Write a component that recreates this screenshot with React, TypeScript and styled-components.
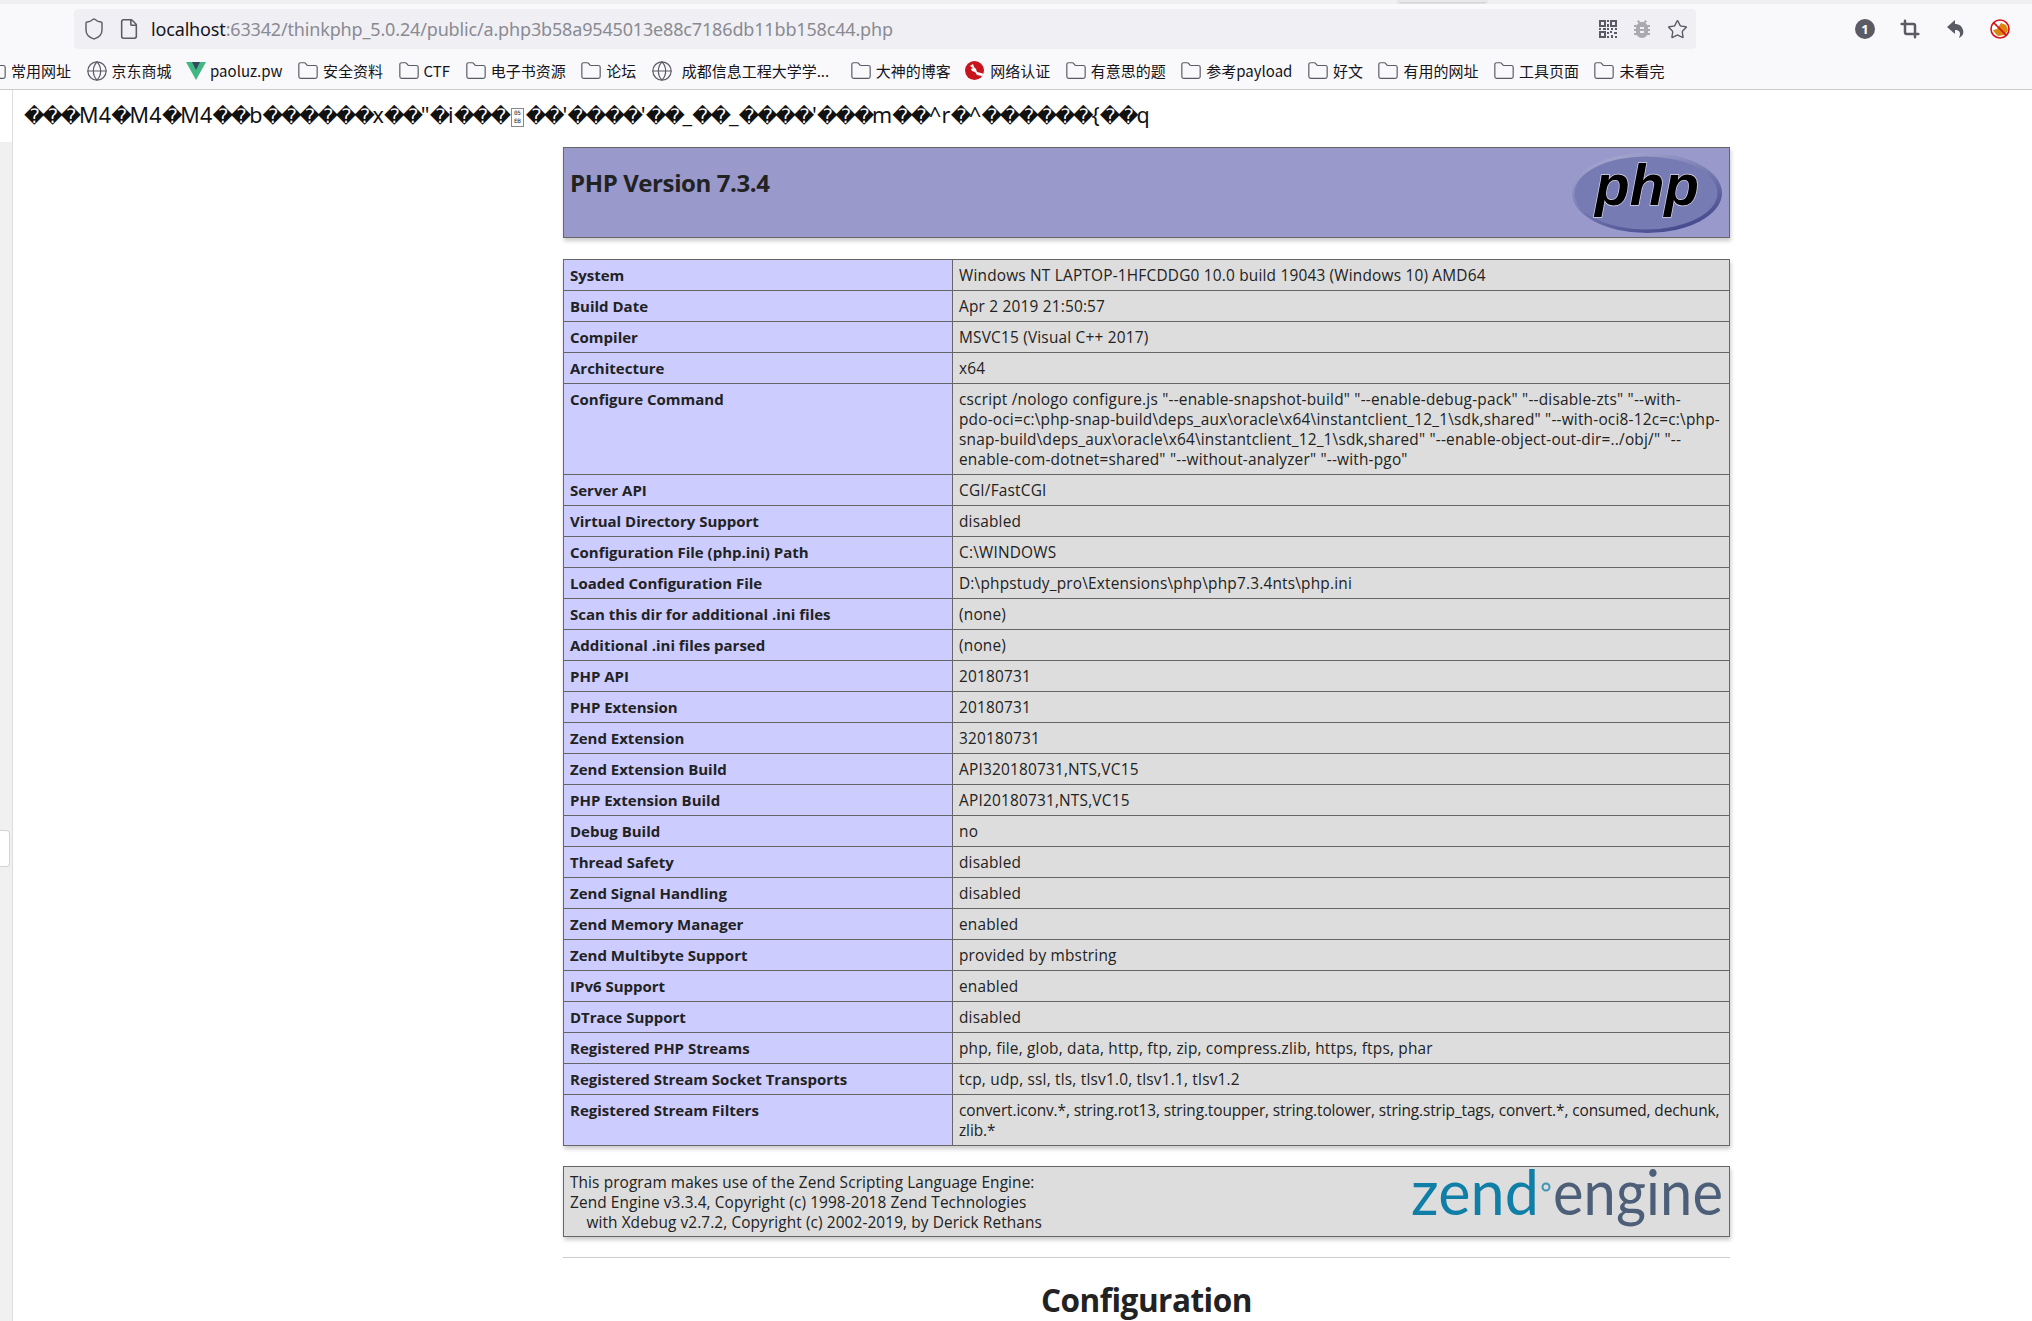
import React from 'react';
import styled, { createGlobalStyle } from 'styled-components';
import { Shield, File, Star, Folder, Globe, Crop } from 'lucide-react';
import { MdBugReport } from 'react-icons/md';

const GlobalStyle = createGlobalStyle`
  html, body {
    margin: 0;
    padding: 0;
    height: 1321px;
    overflow: hidden;
    background: #fff;
  }
  body {
    font-family: 'Open Sans', 'Noto Sans CJK SC', sans-serif;
    color: #222;
  }
`;

const Page = styled.div`
  width: 2032px;
  height: 1321px;
  overflow: hidden;
  display: flex;
  flex-direction: column;
`;

const TabStrip = styled.div`
  height: 4px;
  flex: none;
  background: #f0f0f0;
  padding-left: 1398px;
  overflow: hidden;
`;

const TabEdge = styled.div`
  width: 89px;
  height: 2px;
  border-radius: 0 0 6px 6px;
  box-shadow: 0 1px 3px #bbb;
  background: #e8e8e8;
`;

const Toolbar = styled.div`
  height: 46px;
  flex: none;
  background: #f9f9fb;
  display: flex;
  align-items: flex-start;
  padding: 5px 0 0 74px;
  box-sizing: border-box;
`;

const UrlBar = styled.div`
  width: 1622px;
  height: 40px;
  background: #f0f0f4;
  border-radius: 4px;
  display: flex;
  align-items: center;
  padding: 0 8px;
  box-sizing: border-box;
  color: #5b5b66;
`;

const FileMark = styled(File)`
  margin-left: 12px;
`;

const UrlText = styled.div`
  margin-left: 11px;
  flex: 1;
  font-family: 'Noto Sans', sans-serif;
  font-size: 18px;
  letter-spacing: -0.16px;
  color: #8a8a92;
  white-space: nowrap;
  span {
    color: #15141a;
  }
`;

const UrlIcons = styled.div`
  display: flex;
  align-items: center;
  gap: 13px;
`;

const ToolButtons = styled.div`
  display: flex;
  align-items: center;
  height: 40px;
  margin-left: 159px;
  gap: 25px;
  color: #5b5b66;
`;

const BadgeOne = styled.div`
  width: 20px;
  height: 20px;
  border-radius: 50%;
  background: #5b5b66;
  color: #fff;
  font: 700 13px/20px 'Open Sans', sans-serif;
  text-align: center;
`;

const Bookmarks = styled.div`
  height: 37px;
  padding-top: 2px;
  flex: none;
  background: #f9f9fb;
  border-bottom: 1px solid #ccc;
  display: flex;
  align-items: center;
  gap: 14.5px;
  margin-left: -15px;
  white-space: nowrap;
`;

const Mark = styled.div<{ $wide?: boolean }>`
  display: flex;
  align-items: center;
  gap: ${(p) => (p.$wide ? '9px' : '4px')};
  margin-right: ${(p) => (p.$wide ? '6px' : '0')};
  font-family: 'Noto Sans CJK SC', sans-serif;
  font-size: 15px;
  color: #15141a;
  svg {
    flex: none;
    color: #5b5b66;
  }
`;

const Body = styled.div`
  flex: 1;
  display: flex;
  min-height: 0;
`;

const Gutter = styled.div`
  width: 12px;
  flex: none;
  position: relative;
  background: #f0f0f0;
  border-right: 1px solid #ddd;
`;

const GutterGap = styled.div`
  height: 52px;
  background: #fff;
`;

const Handle = styled.div`
  position: absolute;
  left: 0;
  top: 740px;
  width: 10px;
  height: 37px;
  background: #fff;
  border: 1px solid #d4d4d4;
  border-left: 0;
  border-radius: 0 4px 4px 0;
  box-sizing: border-box;
`;

const Content = styled.div`
  flex: 1;
  min-width: 0;
`;

const Garbage = styled.div`
  height: 47px;
  padding: 6px 0 0 11px;
  box-sizing: border-box;
  display: flex;
  align-items: center;
  white-space: pre;
  font-family: 'Noto Sans', 'DejaVu Sans', sans-serif;
  font-size: 21.5px;
  letter-spacing: 0.25px;
  color: #111;
`;

const Bad = styled.span`
  font-family: 'DejaVu Sans', sans-serif;
  font-size: 20px;
  letter-spacing: -2.2px;
`;

const Tofu = styled.span`
  display: inline-block;
  width: 13px;
  height: 19px;
  margin: 0 2px 6px 2px;
  border: 1px solid #888;
  box-sizing: border-box;
  font-family: 'DejaVu Sans Mono', monospace;
  font-size: 6px;
  line-height: 8px;
  text-align: center;
  letter-spacing: -0.3px;
  color: #222;
`;

const Center = styled.div`
  width: 1167px;
  margin-left: 550px;
  padding-top: 10px;
`;

const HeaderBox = styled.div`
  height: 91px;
  box-sizing: border-box;
  border: 1px solid #666;
  background: #99c;
  box-shadow: 1px 3px 4px #ccc;
  padding: 5px 6px;
  display: flex;
  justify-content: space-between;
`;

const Title = styled.h1`
  margin: 12px 0 0;
  font-family: 'Open Sans', sans-serif;
  font-size: 24px;
  line-height: 36px;
  font-weight: 700;
  letter-spacing: -0.4px;
  color: #222;
`;

const Grid = styled.table`
  width: 1167px;
  margin: 21px 0 20px;
  table-layout: fixed;
  border-collapse: collapse;
  box-shadow: 1px 3px 4px #ccc;
`;

const Cell = styled.td<{ $head?: boolean; $tracking?: number }>`
  border: 1px solid #666;
  padding: ${(p) => (p.$head ? '5px 6px' : '6px 6px 4px')};
  vertical-align: top;
  font-family: 'Open Sans', sans-serif;
  line-height: 20px;
  white-space: pre;
  font-size: ${(p) => (p.$head ? '15px' : '15.4px')};
  letter-spacing: ${(p) => (p.$head ? 0 : p.$tracking ?? 0.2)}px;
  font-weight: ${(p) => (p.$head ? 700 : 400)};
  background: ${(p) => (p.$head ? '#ccf' : '#ddd')};
  width: ${(p) => (p.$head ? '376px' : 'auto')};
`;

const ZendBox = styled.div`
  height: 71px;
  box-sizing: border-box;
  border: 1px solid #666;
  background: #ddd;
  box-shadow: 1px 3px 4px #ccc;
  padding: 6px 6px 4px;
  font-size: 15.4px;
  line-height: 20px;
  letter-spacing: 0.1px;
  white-space: pre;
  display: flex;
  justify-content: space-between;
`;

const ZendMark = styled.svg`
  margin: -20px -5px 0 0;
  flex: none;
`;

const Rule = styled.hr`
  width: 1167px;
  height: 1px;
  margin: 20px 0 0;
  border: 0;
  background: #ccc;
`;

const Section = styled.h2`
  margin: 22px 0 0;
  text-align: center;
  font-family: 'Open Sans', sans-serif;
  font-size: 31.5px;
  line-height: 40px;
  font-weight: 700;
  letter-spacing: -0.5px;
  color: #222;
`;

const QrIcon = () => (
  <svg width="18" height="18" viewBox="0 0 18 18" fill="#5b5b66">
    <path d="M0 0h7v7H0zM2 2v3h3V2zM11 0h7v7h-7zM13 2v3h3V2zM0 11h7v7H0zM2 13v3h3v-3z" fillRule="evenodd" />
    <path d="M8 0h2v2H8zM8 4h2v3H8zM0 8h2v2H0zM4 8h3v2H4zM8 8h2v2H8zM12 8h2v2h-2zM16 8h2v2h-2zM8 12h2v2H8zM11 11h2v2h-2zM15 12h3v2h-3zM8 16h2v2H8zM12 15h2v3h-2zM16 16h2v2h-2z" />
  </svg>
);

const UndoIcon = () => (
  <svg width="20" height="20" viewBox="0 0 20 20" fill="#5b5b66">
    <path d="M10 1L2 8l8 7v-4c3 0 5 1 5 4 0 2-1 3-1 4 4-2 5-5 4-8-1-4-4-6-8-6z" />
  </svg>
);

const NoEntryIcon = () => (
  <svg width="20" height="20" viewBox="0 0 20 20">
    <circle cx="10" cy="10" r="9" fill="#fff" />
    <path d="M3 11l4-1 4-6 5 2 2 5-3 5-7 1-3-3z" fill="#d9860f" />
    <circle cx="10" cy="10" r="9" fill="none" stroke="#d80f16" strokeWidth="1.6" />
    <path d="M3.6 3.6l12.8 12.8" stroke="#d80f16" strokeWidth="1.6" />
  </svg>
);

const VeeIcon = () => (
  <svg width="20" height="18" viewBox="0 0 20 18">
    <path d="M0 0h20L10 18z" fill="#41b883" />
    <path d="M6 0h8l-4 8z" fill="#35495e" />
  </svg>
);

const RedSealIcon = () => (
  <svg width="19" height="19" viewBox="0 0 19 19" style={{ marginRight: 2 }}>
    <circle cx="9.5" cy="9.5" r="9.5" fill="#c8141c" />
    <path d="M5 5l3-2 1 3 2 2 1 3 4 1 3 1-2 2-5-1-2-3-3-1-1-2 2-1z" fill="#fff" />
  </svg>
);

const PhpLogo = () => (
  <svg width="152" height="82" viewBox="0 0 152 82">
    <defs>
      <linearGradient id="phpRim" x1="0.2" y1="0" x2="0.8" y2="1">
        <stop offset="0" stopColor="#a9abd0" />
        <stop offset="0.5" stopColor="#7478b0" />
        <stop offset="1" stopColor="#3f4488" />
      </linearGradient>
    </defs>
    <ellipse cx="76" cy="40" rx="75" ry="40" fill="url(#phpRim)" />
    <ellipse cx="75" cy="40" rx="71.5" ry="36.5" fill="#777bb3" />
    <text
      x="24"
      y="52"
      textLength="104"
      lengthAdjust="spacingAndGlyphs"
      fontFamily="'Liberation Sans', sans-serif"
      fontStyle="italic"
      fontWeight="700"
      fontSize="58"
      fill="#000"
      stroke="#d8d8ea"
      strokeWidth="1.4"
      paintOrder="stroke"
    >
      php
    </text>
  </svg>
);

const ZendLogo = () => (
  <ZendMark width="325" height="88" viewBox="0 0 325 88" fontFamily="Lato, sans-serif" fontWeight="400">
    <text x="8" y="62" fontSize="62" fill="#0f7fa8" textLength="128" lengthAdjust="spacingAndGlyphs">
      zend
    </text>
    <circle cx="143" cy="34" r="3.5" fill="none" stroke="#3d95b6" strokeWidth="2" />
    <text x="150" y="62" fontSize="62" fill="#4d5f78" textLength="170" lengthAdjust="spacingAndGlyphs">
      engine
    </text>
  </ZendMark>
);

const rowsTop: [string, string, number?][] = [
  ['System', 'Windows NT LAPTOP-1HFCDDG0 10.0 build 19043 (Windows 10) AMD64'],
  ['Build Date', 'Apr 2 2019 21:50:57'],
  ['Compiler', 'MSVC15 (Visual C++ 2017)'],
  ['Architecture', 'x64'],
  [
    'Configure Command',
    'cscript /nologo configure.js "--enable-snapshot-build" "--enable-debug-pack" "--disable-zts" "--with-\npdo-oci=c:\\php-snap-build\\deps_aux\\oracle\\x64\\instantclient_12_1\\sdk,shared" "--with-oci8-12c=c:\\php-\nsnap-build\\deps_aux\\oracle\\x64\\instantclient_12_1\\sdk,shared" "--enable-object-out-dir=../obj/" "--\nenable-com-dotnet=shared" "--without-analyzer" "--with-pgo"',
  ],
  ['Server API', 'CGI/FastCGI'],
  ['Virtual Directory Support', 'disabled'],
  ['Configuration File (php.ini) Path', 'C:\\WINDOWS'],
  ['Loaded Configuration File', 'D:\\phpstudy_pro\\Extensions\\php\\php7.3.4nts\\php.ini'],
  ['Scan this dir for additional .ini files', '(none)'],
  ['Additional .ini files parsed', '(none)'],
  ['PHP API', '20180731'],
  ['PHP Extension', '20180731'],
  ['Zend Extension', '320180731'],
  ['Zend Extension Build', 'API320180731,NTS,VC15'],
  ['PHP Extension Build', 'API20180731,NTS,VC15'],
  ['Debug Build', 'no'],
  ['Thread Safety', 'disabled'],
  ['Zend Signal Handling', 'disabled'],
  ['Zend Memory Manager', 'enabled'],
  ['Zend Multibyte Support', 'provided by mbstring'],
  ['IPv6 Support', 'enabled'],
  ['DTrace Support', 'disabled'],
  ['Registered PHP Streams', 'php, file, glob, data, http, ftp, zip, compress.zlib, https, ftps, phar'],
  ['Registered Stream Socket Transports', 'tcp, udp, ssl, tls, tlsv1.0, tlsv1.1, tlsv1.2'],
  [
    'Registered Stream Filters',
    'convert.iconv.*, string.rot13, string.toupper, string.tolower, string.strip_tags, convert.*, consumed, dechunk,\nzlib.*',
    -0.1,
  ],
];

type Kind = 'folder' | 'globe' | 'vee' | 'seal';

const marks: [Kind, string][] = [
  ['folder', '常用网址'],
  ['globe', '京东商城'],
  ['vee', 'paoluz.pw'],
  ['folder', '安全资料'],
  ['folder', 'CTF'],
  ['folder', '电子书资源'],
  ['folder', '论坛'],
  ['globe', '成都信息工程大学学...'],
  ['folder', '大神的博客'],
  ['seal', '网络认证'],
  ['folder', '有意思的题'],
  ['folder', '参考payload'],
  ['folder', '好文'],
  ['folder', '有用的网址'],
  ['folder', '工具页面'],
  ['folder', '未看完'],
];

const markIcon = (kind: Kind) => {
  if (kind === 'globe') return <Globe size={22} strokeWidth={1.3} />;
  if (kind === 'vee') return <VeeIcon />;
  if (kind === 'seal') return <RedSealIcon />;
  return <Folder size={22} strokeWidth={1.3} />;
};

// runs of replacement characters sit tighter than the latin text around them
const garbled = (text: string) =>
  text.split(/(\uFFFD+)/).map((part, i) => (part.startsWith('\uFFFD') ? <Bad key={i}>{part}</Bad> : part));

const App = (): JSX.Element => (
  <Page>
    <GlobalStyle />
    <TabStrip>
      <TabEdge />
    </TabStrip>
    <Toolbar>
      <UrlBar>
        <Shield size={24} strokeWidth={1.4} />
        <FileMark size={22} strokeWidth={1.7} />
        <UrlText>
          <span>localhost</span>:63342/thinkphp_5.0.24/public/a.php3b58a9545013e88c7186db11bb158c44.php
        </UrlText>
        <UrlIcons>
          <QrIcon />
          <MdBugReport size={24} color="#aaaab0" />
          <Star size={21} strokeWidth={1.6} />
        </UrlIcons>
      </UrlBar>
      <ToolButtons>
        <BadgeOne>1</BadgeOne>
        <Crop size={20} strokeWidth={3} />
        <UndoIcon />
        <NoEntryIcon />
      </ToolButtons>
    </Toolbar>
    <Bookmarks>
      {marks.map(([kind, label]) => (
        <Mark key={label} $wide={label.endsWith('...')}>
          {markIcon(kind)}
          {label}
        </Mark>
      ))}
    </Bookmarks>
    <Body>
      <Gutter>
        <GutterGap />
        <Handle />
      </Gutter>
      <Content>
        <Garbage>
          <div>
            {garbled('\uFFFD\uFFFD\uFFFDM4\uFFFDM4\uFFFDM4\uFFFD\uFFFDb\uFFFD\uFFFD\uFFFD\uFFFD\uFFFD\uFFFDx\uFFFD\uFFFD"\uFFFDi\uFFFD\uFFFD\uFFFD')}
            <Tofu>
              05
              <br />
              EB
            </Tofu>
            {garbled("\uFFFD\uFFFD'\uFFFD\uFFFD\uFFFD\uFFFD'\uFFFD\uFFFD_\uFFFD\uFFFD_\uFFFD\uFFFD\uFFFD\uFFFD'\uFFFD\uFFFD\uFFFDm\uFFFD\uFFFD^r\uFFFD^\uFFFD\uFFFD\uFFFD\uFFFD\uFFFD\uFFFD{\uFFFD\uFFFDq")}
          </div>
        </Garbage>
        <Center>
          <HeaderBox>
            <Title>PHP Version 7.3.4</Title>
            <PhpLogo />
          </HeaderBox>
          <Grid>
            <tbody>
              {rowsTop.map(([name, value, tracking]) => (
                <tr key={name}>
                  <Cell $head>{name}</Cell>
                  <Cell $tracking={tracking}>{value}</Cell>
                </tr>
              ))}
            </tbody>
          </Grid>
          <ZendBox>
            <div>
              {'This program makes use of the Zend Scripting Language Engine:\nZend Engine v3.3.4, Copyright (c) 1998-2018 Zend Technologies\n    with Xdebug v2.7.2, Copyright (c) 2002-2019, by Derick Rethans'}
            </div>
            <ZendLogo />
          </ZendBox>
          <Rule />
          <Section>Configuration</Section>
        </Center>
      </Content>
    </Body>
  </Page>
);

export default App;
